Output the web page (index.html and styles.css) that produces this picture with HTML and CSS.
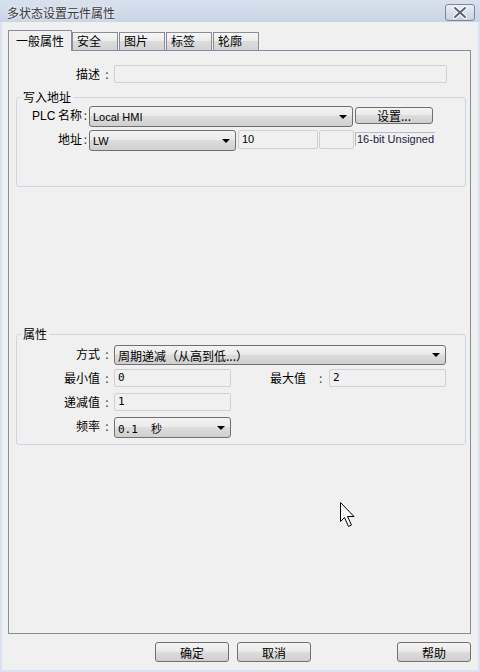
FILE: index.html
```html
<!DOCTYPE html>
<html lang="zh">
<head>
<meta charset="UTF-8" />
<title>多状态设置元件属性</title>
<link rel="stylesheet" href="styles.css">
</head>
<body>
<div class="window">
  <div class="titlebar">
    <span class="title">多状态设置元件属性</span>
    <span class="close">
      <svg width="28" height="15" viewBox="0 0 28 15">
        <path d="M9 3 L19 12 M19 3 L9 12" stroke="#ffffff" stroke-width="4" stroke-linecap="round"/>
        <path d="M9 3 L19 12 M19 3 L9 12" stroke="#5b6270" stroke-width="2" stroke-linecap="round"/>
      </svg>
    </span>
  </div>

  <div class="client">
    <div class="tabs">
      <div class="tab active">一般属性</div>
      <div class="tab">安全</div>
      <div class="tab">图片</div>
      <div class="tab">标签</div>
      <div class="tab">轮廓</div>
    </div>

    <div class="pane">
      <div class="row desc-row">
        <span class="lbl lbl-wide">描述</span><span class="colon">:</span>
        <span class="field desc-field"></span>
      </div>

      <fieldset class="group group-addr">
        <legend>写入地址</legend>
        <div class="row">
          <span class="lbl lbl-narrow"><span class="latin">PLC</span> 名称</span><span class="colon colon-narrow">:</span>
          <span class="combo plc-combo"><span class="combo-text latin-s">Local HMI</span><span class="arrow"></span></span>
          <span class="btn set-btn">设置...</span>
        </div>
        <div class="row row-addr">
          <span class="lbl lbl-narrow">地址</span><span class="colon colon-narrow">:</span>
          <span class="combo addr-combo"><span class="combo-text latin-s">LW</span><span class="arrow"></span></span>
          <span class="field addr-field latin-s">10</span>
          <span class="field addr-blank"></span>
          <span class="type-label latin-s">16-bit Unsigned</span>
        </div>
      </fieldset>

      <fieldset class="group group-props">
        <legend>属性</legend>
        <div class="row">
          <span class="lbl lbl-wide2">方式</span><span class="colon">:</span>
          <span class="combo mode-combo"><span class="combo-text">周期递减（从高到低...）</span><span class="arrow"></span></span>
        </div>
        <div class="row row-gap4">
          <span class="lbl lbl-wide2">最小值</span><span class="colon">:</span>
          <span class="field small-field mono">0</span>
          <span class="lbl max-lbl">最大值</span><span class="colon max-colon">:</span>
          <span class="field small-field mono">2</span>
        </div>
        <div class="row row-gap6">
          <span class="lbl lbl-wide2">递减值</span><span class="colon">:</span>
          <span class="field small-field mono">1</span>
        </div>
        <div class="row row-gap6">
          <span class="lbl lbl-wide2">频率</span><span class="colon">:</span>
          <span class="combo freq-combo"><span class="combo-text mono">0.1&nbsp;&nbsp;秒</span><span class="arrow"></span></span>
        </div>
      </fieldset>
    </div>

    <div class="footer">
      <span class="btn foot-btn">确定</span>
      <span class="btn foot-btn">取消</span>
      <span class="btn foot-btn help-btn">帮助</span>
    </div>
  </div>

  <svg class="cursor" width="16" height="26" viewBox="0 0 16 26">
    <path d="M0.5 0.5 V19.5 L4.5 15.5 L8.5 24.5 L11.5 23 L7.5 14.5 H14 Z" fill="#ffffff" stroke="#000000" stroke-width="1"/>
  </svg>
</div>
</body>
</html>
```

FILE: styles.css
```css
body {
  margin: 0;
  background: #f0f0f0;
  font-family: "Noto Sans CJK SC", sans-serif;
  font-size: 12px;
  color: #000;
}
.window {
  position: relative;
  width: 480px;
  height: 672px;
  display: flex;
  flex-direction: column;
  overflow: hidden;
}
.titlebar {
  height: 22px;
  display: flex;
  align-items: flex-start;
  padding: 0 5px 0 7px;
  background: linear-gradient(#d9e1ee, #c9d4e5);
}
.title {
  line-height: 22px;
  padding-top: 2px;
  color: #3a3a3a;
  text-shadow: 0 0 4px #ffffff;
}
.close {
  margin-left: auto;
  margin-top: 4px;
  width: 28px;
  height: 15px;
  border: 1px solid #7d8597;
  border-radius: 3px;
  background: linear-gradient(#e9eef6, #c9d2e2);
  display: flex;
}
.client {
  flex: 1;
  border: 2px solid #dae2f1;
  border-top: none;
  padding: 8px 7px 0 6px;
  background: #f0f0f0;
}
.tabs {
  height: 20px;
  display: flex;
  align-items: flex-end;
  gap: 1px;
}
.tab {
  box-sizing: border-box;
  width: 46px;
  height: 18px;
  padding-left: 4px;
  border: 1px solid #8a8c9c;
  border-bottom: none;
  background: linear-gradient(#f6f6f6 0, #ececec 45%, #dcdcdc 50%, #d3d3d3 100%);
  line-height: 16px;
}
.tab.active {
  position: relative;
  z-index: 1;
  width: 64px;
  height: 21px;
  margin-bottom: -1px;
  margin-right: -1px;
  padding-left: 7px;
  background: #f0f0f0;
  line-height: 19px;
}
.pane {
  box-sizing: border-box;
  width: 463px;
  height: 584px;
  border: 1px solid #898ca0;
  padding-top: 14px;
}
.row {
  display: flex;
  align-items: flex-start;
}
.lbl {
  text-align: right;
  line-height: 18px;
  white-space: nowrap;
}
.lbl-wide { width: 91px; }
.lbl-wide2 { width: 83px; }
.lbl-narrow { width: 65px; }
.colon {
  width: 14px;
  text-align: center;
  line-height: 18px;
  color: #444;
}
.colon-narrow { width: 7px; }
.latin {
  font-family: "Liberation Sans", sans-serif;
}
.latin-s {
  font-family: "Liberation Sans", sans-serif;
  font-size: 11px;
}
.mono {
  font-family: "DejaVu Sans Mono", "Noto Sans CJK SC", monospace;
  font-size: 11px;
}
.field {
  box-sizing: border-box;
  height: 18px;
  border: 1px solid #cfcfda;
  border-radius: 2px;
  background: #f0f0f0;
  padding-left: 3px;
  line-height: 16px;
}
.desc-field { width: 333px; }
.group {
  box-sizing: border-box;
  width: 450px;
  margin: 0 0 0 7px;
  padding: 0;
  border: 1px solid #d3d3e6;
  border-radius: 3px;
}
.group legend {
  margin-left: 4px;
  padding: 0 2px;
  line-height: 14px;
  font-size: 12px;
}
.group-addr {
  margin-top: 7px;
  padding: 2px 0 35px;
}
.group-props {
  margin-top: 140px;
  padding: 4px 0 6px;
}
.combo {
  box-sizing: border-box;
  display: flex;
  align-items: center;
  height: 21px;
  border: 1px solid #707070;
  border-radius: 3px;
  background: linear-gradient(#f3f3f3 0, #ebebeb 45%, #dddddd 50%, #cfcfcf 100%);
  padding: 0 5px 0 3px;
}
.combo-text {
  flex: 1;
  white-space: nowrap;
  overflow: hidden;
}
.arrow {
  width: 0;
  height: 0;
  border-left: 4px solid transparent;
  border-right: 4px solid transparent;
  border-top: 4px solid #000;
}
.plc-combo { width: 264px; }
.addr-combo { width: 147px; }
.mode-combo { width: 332px; height: 20px; }
.freq-combo { width: 117px; }
.btn {
  box-sizing: border-box;
  display: flex;
  align-items: center;
  justify-content: center;
  border: 1px solid #707070;
  border-radius: 3px;
  background: linear-gradient(#f3f3f3 0, #ebebeb 45%, #dddddd 50%, #cfcfcf 100%);
}
.set-btn {
  width: 78px;
  height: 17px;
  margin: 1px 0 0 2px;
}
.row-addr { margin-top: 3px; }
.addr-field {
  width: 80px;
  height: 19px;
  margin-left: 2px;
  line-height: 17px;
}
.addr-blank {
  width: 35px;
  height: 19px;
  margin-left: 1px;
}
.type-label {
  box-sizing: border-box;
  width: 80px;
  height: 14px;
  margin: 2px 0 0 1px;
  padding-left: 1px;
  border-top: 1px solid #b9b9c4;
  border-left: 1px solid #b9b9c4;
  line-height: 12px;
  color: #1a1a40;
  white-space: nowrap;
}
.row-gap4 { margin-top: 4px; }
.row-gap6 { margin-top: 6px; }
.small-field { width: 117px; }
.max-lbl { width: 75px; }
.max-colon {
  width: 23px;
  text-align: left;
  padding-left: 13px;
  box-sizing: border-box;
}
.footer {
  display: flex;
  gap: 8px;
  margin-top: 8px;
  padding-left: 147px;
}
.foot-btn {
  width: 74px;
  height: 20px;
}
.help-btn { margin-left: auto; }
.cursor {
  position: absolute;
  left: 340px;
  top: 502px;
}
```
